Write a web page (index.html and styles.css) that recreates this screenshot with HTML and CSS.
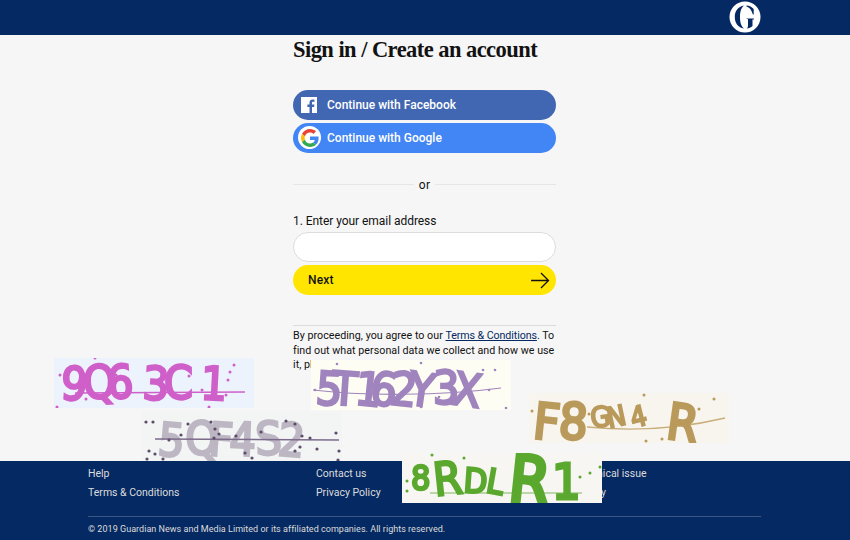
FILE: index.html
```html
<!DOCTYPE html>
<html lang="en">
<head>
<meta charset="utf-8">
<title>Sign in / Create an account</title>
<link rel="stylesheet" href="styles.css">
</head>
<body>
<div class="page">
  <header class="topbar">
    <svg class="logo" viewBox="0 0 32 32" width="32" height="32" aria-label="The Guardian">
      <circle cx="16" cy="16" r="15.5" fill="#fff"/>
      <path d="M15 4.500C9 5.500 5.800 10 5.800 16s3.200 10.500 9.200 11.500C11.800 25 11 20.500 11 16s.8-9 4-11.500z" fill="#052962"/>
      <path d="M17.500 4.500c3 .2 5.500 1.500 7.200 3.500v5.500h-.8C22.500 9 20.500 6 17.500 5.400z" fill="#052962"/>
      <path d="M17.500 17.500h7.500v1h-1.500v6.500c-1.500 1.500-3.500 2.200-6 2.500 1-.5 1.500-1.500 1.500-3v-6.300l-1.500-.5z" fill="#052962"/>
    </svg>
  </header>

  <main class="main">
    <section class="panel">
      <h1 class="title">Sign in / Create an account</h1>

      <div class="socials">
        <a class="btn btn-fb">
          <svg class="fb-icon" viewBox="0 0 16 16" width="16" height="16"><path d="M0 0h16v16h-5v-6h2.100l.3-2.400H11V6c0-.7.200-1.200 1.200-1.200h1.300V2.700c-.3 0-1-.1-1.900-.1-1.900 0-3.100 1.100-3.100 3.200v1.800H6.400V10h2.100v6H0z" fill="#fff"/></svg>
          <span>Continue with Facebook</span>
        </a>
        <a class="btn btn-google">
          <span class="g-badge">
            <svg viewBox="0 0 48 48" width="18" height="18">
              <path fill="#EA4335" d="M24 9.500c3.500 0 6.700 1.300 9.100 3.500l6.800-6.800C35.800 2.400 30.200 0 24 0 14.600 0 6.500 5.400 2.600 13.200l7.900 6.200C12.400 13.700 17.700 9.500 24 9.500z"/>
              <path fill="#4285F4" d="M46.900 24.500c0-1.600-.1-3.100-.4-4.500H24v9h12.900c-.6 3-2.200 5.500-4.700 7.200l7.700 6c4.500-4.200 7-10.300 7-17.700z"/>
              <path fill="#FBBC05" d="M10.500 28.600c-.5-1.400-.8-3-.8-4.600s.3-3.200.8-4.600l-7.900-6.200C.9 16.500 0 20.100 0 24s.9 7.500 2.600 10.800z"/>
              <path fill="#34A853" d="M24 48c6.500 0 11.900-2.100 15.900-5.800l-7.700-6c-2.200 1.400-4.900 2.300-8.200 2.300-6.300 0-11.600-4.200-13.500-9.900l-7.900 6.200C6.500 42.600 14.600 48 24 48z"/>
            </svg>
          </span>
          <span>Continue with Google</span>
        </a>
      </div>

      <div class="divider"><span class="divider-text">or</span></div>

      <label class="field-label" for="email">1. Enter your email address</label>
      <input class="email" id="email" type="email">
      <button class="btn-next" type="button">
        <span>Next</span>
        <svg viewBox="0 0 20 18" width="19" height="17"><path d="M0 9h18M10.500 1l8 8-8 8" fill="none" stroke="#121212" stroke-width="1.400"/></svg>
      </button>

      <p class="legal">By proceeding, you agree to our <a class="legal-link">Terms &amp; Conditions</a>. To find out what personal data we collect and how we use it, please visit our Privacy Policy.</p>
    </section>
  </main>

  <footer class="footer">
    <div class="foot-inner">
      <ul class="foot-links">
        <li>Help</li>
        <li>Contact us</li>
        <li>Report technical issue</li>
        <li>Terms &amp; Conditions</li>
        <li>Privacy Policy</li>
        <li>Cookie Policy</li>
      </ul>
      <p class="copy">© 2019 Guardian News and Media Limited or its affiliated companies. All rights reserved.</p>
    </div>
  </footer>

  <svg class="captcha cap-1" viewBox="0 0 200 50" width="200" height="50">
    <rect width="200" height="50" fill="#edf3fd"/>
    <g class="soft">
      <line x1="21" y1="35" x2="191" y2="34" stroke="#cf5fc9" stroke-width="1.500"/>
      <text class="cap-text" x="6 30 54 88 110 146" y="41" rotate="4 -3 -4 3 0 3" fill="#cf5fc9" stroke="#cf5fc9">9Q63C1</text>
    </g>
    <g fill="#cf5fc9"><circle cx="6" cy="17" r="1.500"/><circle cx="16" cy="29" r="1.500"/><circle cx="32" cy="41" r="1.500"/><circle cx="36" cy="10" r="1.500"/><circle cx="48" cy="8" r="1.500"/><circle cx="62" cy="17" r="1.500"/><circle cx="75" cy="29" r="1.500"/><circle cx="105" cy="26" r="1.500"/><circle cx="135" cy="18" r="1.500"/><circle cx="148" cy="32" r="1.500"/><circle cx="172" cy="37" r="1.500"/><circle cx="174" cy="22" r="1.500"/><circle cx="176" cy="14" r="1.500"/><circle cx="180" cy="7" r="1.500"/><circle cx="3" cy="49" r="1.500"/><circle cx="155" cy="49" r="1.500"/><circle cx="41" cy="0" r="1.500"/></g>
  </svg>

  <svg class="captcha cap-2" viewBox="0 0 200 50" width="200" height="50">
    <rect width="200" height="50" fill="#f3f5f5"/>
    <g class="soft">
      <text class="cap-text" x="15 44 66 87 114 135" y="44" rotate="5 -2 4 2 -2 5" fill="#bdb6c3" stroke="#bdb6c3">5QF4S2</text>
      <line x1="13" y1="28" x2="197" y2="29" stroke="#7d6b8b" stroke-width="1.500"/>
    </g>
    <g fill="#5d4c6a"><circle cx="4" cy="11" r="1.600"/><circle cx="11" cy="11" r="1.600"/><circle cx="7" cy="40" r="1.600"/><circle cx="13" cy="43" r="1.600"/><circle cx="5" cy="48" r="1.600"/><circle cx="21" cy="48" r="1.600"/><circle cx="27" cy="29" r="1.600"/><circle cx="39" cy="24" r="1.600"/><circle cx="46" cy="13" r="1.600"/><circle cx="69" cy="11" r="1.600"/><circle cx="73" cy="18" r="1.600"/><circle cx="72" cy="27" r="1.600"/><circle cx="77" cy="23" r="1.600"/><circle cx="94" cy="25" r="1.600"/><circle cx="103" cy="42" r="1.600"/><circle cx="110" cy="47" r="1.600"/><circle cx="119" cy="21" r="1.600"/><circle cx="144" cy="10" r="1.600"/><circle cx="153" cy="13" r="1.600"/><circle cx="160" cy="25" r="1.600"/><circle cx="153" cy="40" r="1.600"/><circle cx="158" cy="36" r="1.600"/><circle cx="168" cy="27" r="1.600"/><circle cx="175" cy="38" r="1.600"/><circle cx="194" cy="22" r="1.600"/><circle cx="197" cy="40" r="1.600"/><circle cx="196" cy="49" r="1.600"/></g>
  </svg>

  <svg class="captcha cap-3" viewBox="0 0 200 50" width="200" height="50">
    <rect width="200" height="50" fill="#fdfdf4"/>
    <g class="soft">
      <path d="M2 30C50 36 130 36 190 28" stroke="#a084bd" stroke-width="1.200" fill="none"/>
      <text class="cap-text" x="4 20 43 58 78 96 122 140" y="44" rotate="4 4 6 6 6 8 0 8" fill="#a084bd" stroke="#a084bd">5T162Y3X</text>
    </g>
    <g fill="#a084bd"><circle cx="4" cy="30" r="1.300"/><circle cx="26" cy="4" r="1.300"/><circle cx="60" cy="12" r="1.300"/><circle cx="110" cy="3" r="1.300"/><circle cx="128" cy="37" r="1.300"/><circle cx="172" cy="10" r="1.300"/><circle cx="184" cy="10" r="1.300"/><circle cx="178" cy="30" r="1.300"/><circle cx="195" cy="48" r="1.300"/><circle cx="110" cy="47" r="1.300"/></g>
  </svg>

  <svg class="captcha cap-4" viewBox="0 0 200 50" width="200" height="50">
    <rect width="200" height="50" fill="#f8f5ef"/>
    <g class="soft">
      <path d="M58 34C100 38 150 36 196 25" stroke="#c8ae7a" stroke-width="1.300" fill="none"/>
      <text class="cap-big" x="3 29" y="45" rotate="6 4" fill="#b99a5b" stroke="#b99a5b">F8</text>
      <text class="cap-small" x="63 80 104" y="35" rotate="-8 -12 -14" fill="#b99a5b" stroke="#b99a5b">GN4</text>
      <text class="cap-big" x="136" y="45" rotate="8" fill="#b99a5b" stroke="#b99a5b">R</text>
    </g>
    <g fill="#b99a5b"><circle cx="3" cy="18" r="1.500"/><circle cx="12" cy="40" r="1.500"/><circle cx="60" cy="21" r="1.500"/><circle cx="115" cy="2" r="1.500"/><circle cx="112" cy="21" r="1.500"/><circle cx="117" cy="48" r="1.500"/><circle cx="133" cy="46" r="1.500"/><circle cx="170" cy="16" r="1.500"/><circle cx="185" cy="6" r="1.500"/></g>
  </svg>

  <svg class="captcha cap-5" viewBox="0 0 200 50" width="200" height="50">
    <rect width="200" height="50" fill="#f8f6f3"/>
    <g class="soft">
      <line x1="28" y1="40" x2="180" y2="40" stroke="#a7cc8f" stroke-width="1.500"/>
      <text class="cap-small-g" x="9" y="37" fill="#5aa82e" stroke="#5aa82e">8</text>
      <text class="cap-text" x="33" y="43" rotate="-6" fill="#5aa82e" stroke="#5aa82e">R</text>
      <text class="cap-small-g" x="61 83" y="39" rotate="4 10" fill="#5aa82e" stroke="#5aa82e">DL</text>
      <text class="cap-huge" x="105" y="48" rotate="6" fill="#5aa82e" stroke="#5aa82e">R</text>
      <text class="cap-big" x="150" y="46" fill="#5aa82e" stroke="#5aa82e">1</text>
    </g>
    <g fill="#5aa82e"><circle cx="5" cy="28" r="1.500"/><circle cx="5" cy="38" r="1.500"/><circle cx="30" cy="2" r="1.500"/><circle cx="62" cy="5" r="1.500"/><circle cx="134" cy="32" r="1.500"/><circle cx="178" cy="24" r="1.500"/><circle cx="188" cy="20" r="1.500"/><circle cx="198" cy="14" r="1.500"/></g>
  </svg>
</div>
</body>
</html>
```
FILE: styles.css
```css
* { box-sizing: border-box; }
html, body { margin: 0; padding: 0; }
body { font-family: Roboto, "Noto Sans", sans-serif; color: #121212; background: #f6f6f6; }
.page { position: relative; width: 850px; height: 540px; overflow: hidden; display: flex; flex-direction: column; }

.topbar { height: 35px; flex: none; background: #052962; display: flex; justify-content: flex-end; align-items: flex-start; padding: 1px 89px 0 0; }
.logo { display: block; }

.main { flex: 1; display: flex; justify-content: center; }
.panel { width: 263px; margin-left: -1px; }
.title { margin: 0; height: 55px; font: 700 22.500px/30px "Liberation Serif", serif; letter-spacing: -0.550px; }

.socials { display: flex; flex-direction: column; gap: 3px; }
.btn { height: 30px; border-radius: 15px; display: flex; align-items: center; color: #fff; font-size: 12px; font-weight: 500; line-height: 16px; padding-bottom: 1px; }
.btn-fb { background: #4267b2; padding-left: 8px; gap: 10px; }
.btn-google { background: #4285f4; padding-left: 5px; gap: 6px; }
.g-badge { width: 23px; height: 23px; border-radius: 50%; background: #fff; display: flex; align-items: center; justify-content: center; }

.divider { margin-top: 31px; height: 1px; background: #e6e6e6; display: flex; justify-content: center; align-items: center; }
.divider-text { background: #f6f6f6; padding: 0 5px; font-size: 12px; line-height: 16px; letter-spacing: .2px; }

.field-label { display: block; margin-top: 28px; font-size: 12px; line-height: 16px; letter-spacing: -.05px; }
.email { display: block; width: 100%; height: 30px; margin-top: 3px; border: 1px solid #dcdcdc; border-radius: 15px; background: #fff; }
.btn-next { width: 100%; height: 30px; margin-top: 3px; border: 0; border-radius: 15px; background: #ffe500; display: flex; align-items: center; justify-content: space-between; padding: 0 6px 0 15px; font: 500 12px Roboto, sans-serif; letter-spacing: .2px; color: #121212; }

.legal { margin: 30px 0 0; padding-top: 3px; border-top: 1px solid #dcdcdc; font-size: 10.700px; line-height: 14.500px; letter-spacing: .03px; }
.legal-link { color: #052962; text-decoration: underline; letter-spacing: -.1px; }

.footer { height: 79px; flex: none; background: #052962; color: #dcdcdc; padding: 0 89px 0 88px; font-size: 10.500px; }
.foot-links { list-style: none; margin: 0; padding: 5px 0 0; display: grid; grid-template-columns: 228px 227px 1fr; grid-auto-rows: 15px; row-gap: 4px; align-content: start; height: 55px; }
.foot-links li { line-height: 15px; }
.copy { margin: 0; border-top: 1px solid #3a5687; padding-top: 5px; font-size: 9px; line-height: 14px; letter-spacing: .03px; }

.captcha { position: absolute; display: block; }
.cap-1 { left: 54px; top: 358px; }
.cap-2 { left: 142px; top: 411px; }
.cap-3 { left: 311px; top: 360px; }
.cap-4 { left: 529px; top: 393px; }
.cap-5 { left: 402px; top: 453px; }
.soft { filter: blur(.5px); }
.cap-text { font: 400 46px "Liberation Sans Narrow", "DejaVu Sans Condensed", sans-serif; stroke-width: 2.500px; }
.cap-small { font: 400 28px "Liberation Sans Narrow", "DejaVu Sans Condensed", sans-serif; stroke-width: 2px; }
.cap-small-g { font: 400 34px "Liberation Sans Narrow", "DejaVu Sans Condensed", sans-serif; stroke-width: 2.500px; }
.cap-big { font: 400 50px "Liberation Sans Narrow", "DejaVu Sans Condensed", sans-serif; stroke-width: 3px; }
.cap-huge { font: 400 66px "Liberation Sans Narrow", "DejaVu Sans Condensed", sans-serif; stroke-width: 4px; }
```
